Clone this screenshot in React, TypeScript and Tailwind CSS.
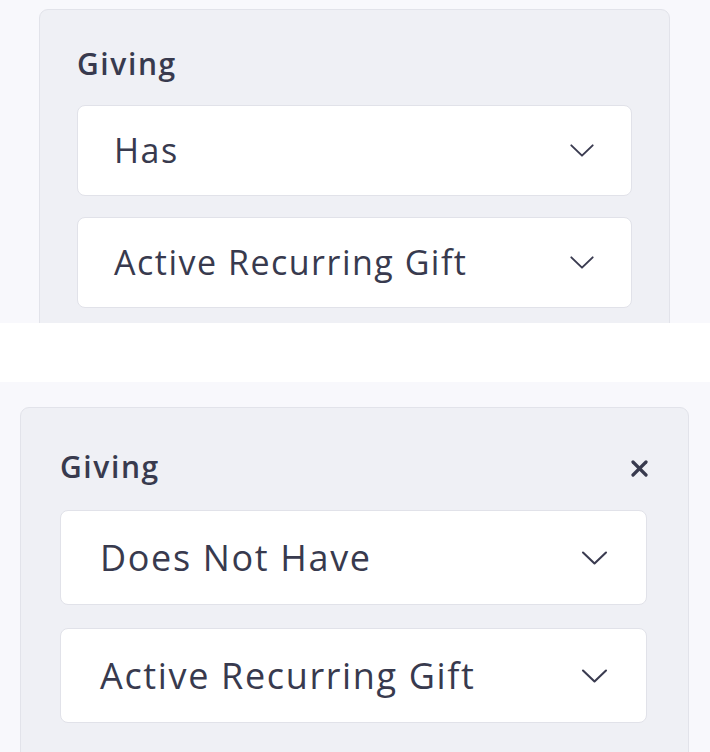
import type { ReactNode } from "react"

const font = { fontFamily: "'Open Sans', Lato, sans-serif" }

function Chevron({ className }: { className: string }) {
  return (
    <svg className={className} viewBox="0 0 26 14" fill="none" stroke="#3a3b50" strokeWidth="2.1" strokeLinecap="round" strokeLinejoin="round">
      <polyline points="1.5,1.5 13,12.5 24.5,1.5" />
    </svg>
  )
}

function SelectBox({ label, className, textClass, iconClass }: { label: string; className: string; textClass: string; iconClass: string }) {
  return (
    <div className={`flex items-center justify-between bg-white border border-[#e1e2e9] rounded-[8px] ${className}`}>
      <span className={`text-[#383a4e] ${textClass}`}>{label}</span>
      <Chevron className={iconClass} />
    </div>
  )
}

function Section({ children, className }: { children: ReactNode; className: string }) {
  return <div className={`bg-[#f8f8fc] overflow-hidden ${className}`}>{children}</div>
}

export default function App() {
  return (
    <div className="w-[710px] h-[752px] bg-white" style={font}>
      <Section className="h-[323px] pt-[9px] pl-[39px] pr-[40px]">
        <div className="h-[340px] bg-[#eff0f5] border border-[#e2e3ea] rounded-[9px] pt-[38px] px-[37px]">
          <div className="text-[30px] leading-[32px] font-semibold tracking-[1.6px] text-[#383a4e] mb-[25px]">Giving</div>
          <div className="flex flex-col gap-[21px]">
            <SelectBox label="Has" className="h-[91px] pl-[36px] pr-[36px]" textClass="text-[34px] tracking-[1.5px]" iconClass="w-[26px] h-[13px]" />
            <SelectBox label="Active Recurring Gift" className="h-[91px] pl-[36px] pr-[36px]" textClass="text-[34px] tracking-[1.5px]" iconClass="w-[26px] h-[13px]" />
          </div>
        </div>
      </Section>
      <div className="h-[59px] bg-white" />
      <Section className="h-[370px] pt-[25px] pl-[20px] pr-[21px]">
        <div className="h-[400px] bg-[#eff0f5] border border-[#e2e3ea] rounded-[9px] pt-[41px] pl-[39px] pr-[41px]">
          <div className="flex items-start justify-between mb-[25px]">
            <span className="text-[30px] leading-[36px] font-semibold tracking-[1.6px] text-[#383a4e]">Giving</span>
            <svg className="w-[17px] h-[17px] mt-[11px] mr-[-1px]" viewBox="0 0 17 17" fill="none" stroke="#383a4e" strokeWidth="3.2" strokeLinecap="round">
              <line x1="2" y1="2" x2="15" y2="15" />
              <line x1="15" y1="2" x2="2" y2="15" />
            </svg>
          </div>
          <div className="flex flex-col gap-[23px]">
            <SelectBox label="Does Not Have" className="h-[95px] pl-[39px] pr-[38px]" textClass="text-[36px] tracking-[1.65px]" iconClass="w-[27px] h-[14px]" />
            <SelectBox label="Active Recurring Gift" className="h-[95px] pl-[39px] pr-[38px]" textClass="text-[36px] tracking-[1.65px]" iconClass="w-[27px] h-[14px]" />
          </div>
        </div>
      </Section>
    </div>
  )
}
